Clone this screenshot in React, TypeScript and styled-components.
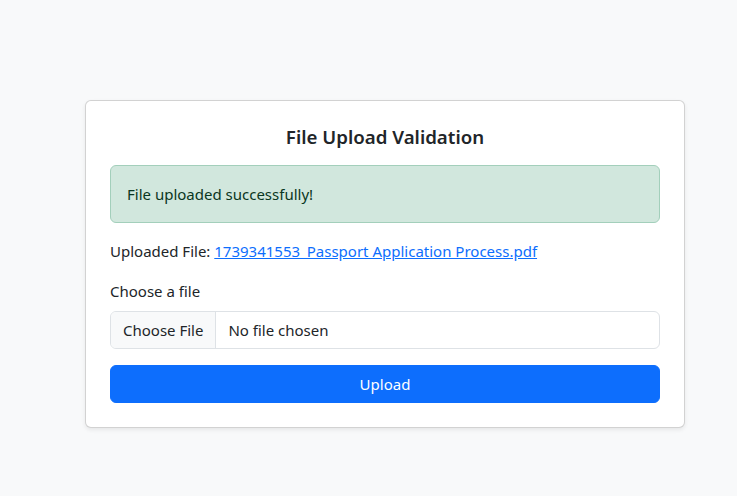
import React, { ReactElement } from 'react';
import styled, { createGlobalStyle } from 'styled-components';

const GlobalStyle = createGlobalStyle`
    * {
        box-sizing: border-box;
    }
    body {
        margin: 0;
        background-color: #f8f9fa;
        color: #212529;
        font-family: 'Noto Sans', 'Open Sans', sans-serif;
        font-size: 15px;
        line-height: 24px;
    }
`;

const Page = styled.main`
    min-height: 496px;
    padding: 100px 0 0 85px;
`;

const Card = styled.section`
    width: 600px;
    padding: 24px;
    background-color: #fff;
    border: 1px solid rgba(0, 0, 0, 0.175);
    border-radius: 6px;
    box-shadow: 0 2px 4px rgba(0, 0, 0, 0.075);
`;

const Title = styled.h4`
    margin: 0 0 16px;
    font-size: 18.7px;
    font-weight: 600;
    line-height: 24px;
    text-align: center;
`;

const Alert = styled.div`
    margin-bottom: 16px;
    padding: 16px;
    color: #0a3622;
    background-color: #d1e7dd;
    border: 1px solid #a3cfbb;
    border-radius: 6px;
`;

const Info = styled.p`
    margin: 0 0 16px;
`;

const Link = styled.a`
    color: #0d6efd;
    text-decoration: underline;
`;

const Field = styled.div`
    margin-bottom: 16px;
`;

const Label = styled.label`
    display: inline-block;
    margin-bottom: 8px;
`;

const FileInput = styled.input`
    display: block;
    width: 100%;
    height: 38px;
    padding: 6px 12px;
    font: inherit;
    color: #212529;
    background-color: #fff;
    border: 1px solid #dee2e6;
    border-radius: 6px;
    overflow: hidden;

    &::file-selector-button {
        height: 36px;
        margin: -6px 12px -6px -12px;
        padding: 6px 12px;
        font: inherit;
        color: #212529;
        background-color: #f8f9fa;
        border: 0;
        border-right: 1px solid #dee2e6;
        border-radius: 0;
    }
`;

const Button = styled.button`
    display: block;
    width: 100%;
    padding: 6px 12px;
    font: inherit;
    color: #fff;
    background-color: #0d6efd;
    border: 1px solid #0d6efd;
    border-radius: 6px;
`;

const App = (): ReactElement => {
    return (
        <>
            <GlobalStyle />
            <Page>
                <Card>
                    <Title>File Upload Validation</Title>
                    <Alert>File uploaded successfully!</Alert>
                    <Info>
                        Uploaded File: <Link href="#">1739341553_Passport Application Process.pdf</Link>
                    </Info>
                    <Field>
                        <Label htmlFor="file">Choose a file</Label>
                        <FileInput id="file" type="file" />
                    </Field>
                    <Button type="button">Upload</Button>
                </Card>
            </Page>
        </>
    );
};

export default App;
